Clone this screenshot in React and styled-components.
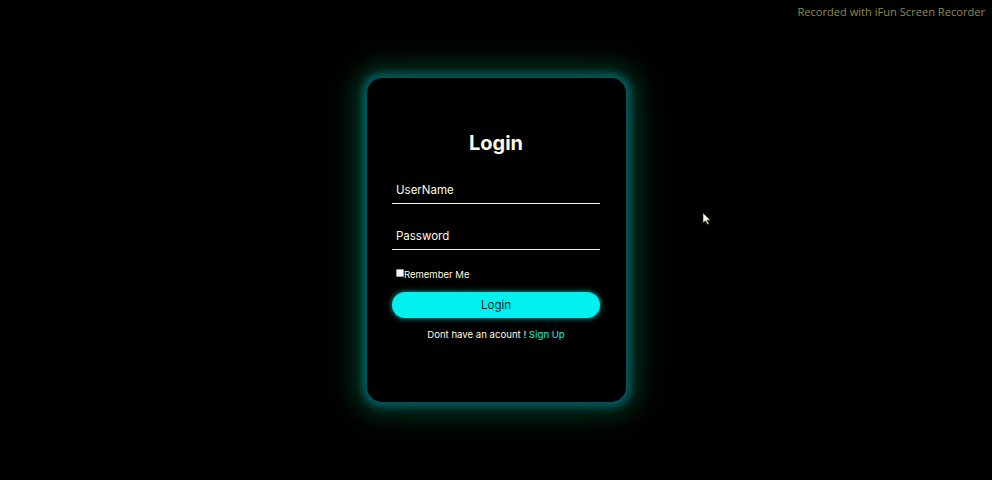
import React from "react";
import styled, { createGlobalStyle } from "styled-components";

const Global = createGlobalStyle`
  html, body { margin: 0; padding: 0; background: #000; }
  body { font-family: Inter, "Open Sans", sans-serif; }
  * { box-sizing: border-box; }
`;

const Page = styled.div`
  position: relative;
  width: 100%;
  height: 100vh;
  min-height: 480px;
  background: #000;
  display: flex;
  align-items: center;
  justify-content: center;
  overflow: hidden;
`;

const Watermark = styled.div`
  position: absolute;
  top: 4px;
  right: 7px;
  font-family: "Open Sans", sans-serif;
  font-size: 11.1px;
  color: #8d8a52;
`;

const Cursor = styled.svg`
  position: absolute;
  left: 702px;
  top: 212px;
`;

const Card = styled.form`
  width: 259px;
  height: 324px;
  margin-left: 1px;
  background: #000;
  border-radius: 15px;
  box-shadow: 0 0 6px 5px rgba(0, 96, 108, 0.8),
    0 0 20px 11px rgba(0, 95, 70, 0.45),
    0 0 40px 18px rgba(0, 85, 35, 0.25);
  padding: 50px 26px 0 25px;
  display: flex;
  flex-direction: column;
`;

const Title = styled.h1`
  margin: 0;
  height: 30px;
  line-height: 30px;
  text-align: center;
  font-size: 20px;
  font-weight: 700;
  color: #fffbe2;
`;

const Field = styled.input`
  display: block;
  width: 100%;
  height: 31px;
  margin-top: ${(p) => p.$top}px;
  padding: 3px 0 0 4px;
  background: transparent;
  border: none;
  border-bottom: 1px solid #f2f2f2;
  outline: none;
  font-family: Inter, sans-serif;
  font-size: 11.5px;
  color: #fffbe2;
  &::placeholder { color: #fffbe2; opacity: 1; }
`;

const CheckRow = styled.label`
  display: flex;
  align-items: center;
  margin-top: 18px;
  padding-left: 4px;
  height: 12px;
  font-size: 9.5px;
  color: #fffbe2;
`;

const Box = styled.input`
  appearance: none;
  width: 8px;
  height: 8px;
  margin: -2px 0 0 0;
  background: #f4f4f0;
  border: 1px solid #9a9a9a;
  border-radius: 1px;
`;

const Button = styled.button`
  margin-top: 12px;
  height: 26px;
  width: 100%;
  border: none;
  border-radius: 13px;
  background: #00efef;
  box-shadow: 0 0 5px 1px rgba(0, 200, 200, 0.6);
  color: #08262a;
  font-family: Inter, sans-serif;
  font-size: 11.5px;
  cursor: pointer;
`;

const Footer = styled.p`
  margin: 10px 0 0;
  text-align: center;
  font-size: 9.6px;
  line-height: 14px;
  color: #fffbe2;
`;

const SignUp = styled.a`
  color: #22d4c6;
  font-weight: 500;
  text-decoration: none;
`;

export default function App() {
  return (
    <>
      <Global />
      <Page>
        <Watermark>Recorded with iFun Screen Recorder</Watermark>
        <Card onSubmit={(e) => e.preventDefault()}>
          <Title>Login</Title>
          <Field $top={15} type="text" placeholder="UserName" />
          <Field $top={15} type="password" placeholder="Password" />
          <CheckRow>
            <Box type="checkbox" />
            Remember Me
          </CheckRow>
          <Button type="submit">Login</Button>
          <Footer>
            Dont have an acount ! <SignUp href="#">Sign Up</SignUp>
          </Footer>
        </Card>
        <Cursor width="10" height="14" viewBox="0 0 10 14">
          <path d="M1 1 L1 11 L3.5 8.8 L5.5 12.5 L7 11.8 L5 8.2 L8.5 8.2 Z" fill="#fffbe0" stroke="#222" strokeWidth="0.6" />
        </Cursor>
      </Page>
    </>
  );
}
